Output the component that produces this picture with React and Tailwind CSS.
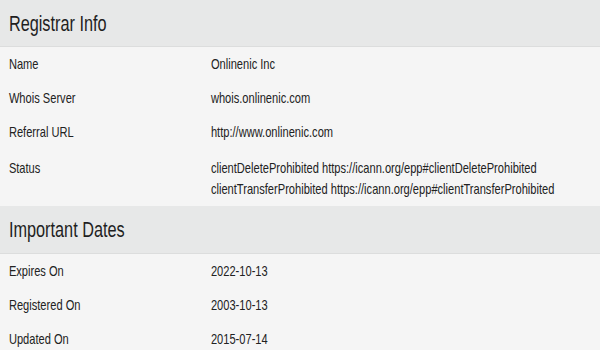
import React from 'react';

const registrar = [
  { label: 'Name', value: ['Onlinenic Inc'] },
  { label: 'Whois Server', value: ['whois.onlinenic.com'] },
  { label: 'Referral URL', value: ['http://www.onlinenic.com'] },
  {
    label: 'Status',
    value: [
      'clientDeleteProhibited https://icann.org/epp#clientDeleteProhibited',
      'clientTransferProhibited https://icann.org/epp#clientTransferProhibited',
    ],
  },
];

const dates = [
  { label: 'Expires On', value: ['2022-10-13'] },
  { label: 'Registered On', value: ['2003-10-13'] },
  { label: 'Updated On', value: ['2015-07-14'] },
];

const SectionHeader = ({ title, tall }) => (
  <div
    className={`flex items-center pl-3 bg-[#e7e8e8] border-b border-[#dcdddd] text-[22px] text-[#1f1f1f] ${
      tall ? 'h-[48px]' : 'h-[47px]'
    }`}
  >
    {title}
  </div>
);

const Row = ({ label, value }) => {
  const multi = value.length > 1;
  return (
    <div
      className={`grid grid-cols-[285px_1fr] text-[15px] text-[#222] ${
        multi ? 'pt-[8px] pb-[7px] leading-[21px]' : 'h-[34px] items-center leading-[20px]'
      }`}
    >
      <div className="pl-3">{label}</div>
      <div>
        {value.map((line) => (
          <div key={line} className="whitespace-nowrap">
            {line}
          </div>
        ))}
      </div>
    </div>
  );
};

const App = () => {
  return (
    <div className="w-[600px] h-[350px] overflow-hidden bg-[#f5f5f5]">
      <div
        className="w-[811px] origin-top-left scale-x-[0.74] bg-[#f5f5f5]"
        style={{ fontFamily: '"Liberation Sans", Arial, sans-serif' }}
      >
        <SectionHeader title="Registrar Info" />
        {registrar.map((r) => (
          <Row key={r.label} {...r} />
        ))}
        <SectionHeader title="Important Dates" tall />
        {dates.map((r) => (
          <Row key={r.label} {...r} />
        ))}
      </div>
    </div>
  );
};

export default App;
